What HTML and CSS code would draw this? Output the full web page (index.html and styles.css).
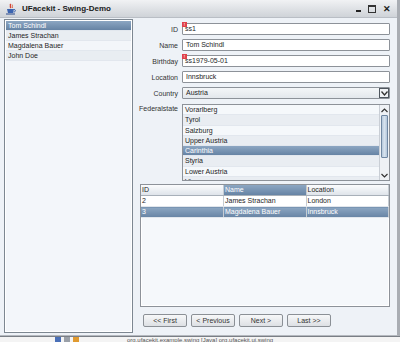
FILE: index.html
```html
<!DOCTYPE html>
<html lang="en">
<head>
    <meta charset="UTF-8">
    <title>UFacekit - Swing-Demo</title>
    <link rel="stylesheet" href="styles.css">
</head>
<body>
    <div class="window">
        <!-- Title bar -->
        <div class="titlebar">
            <svg class="app-icon" width="12" height="12" viewBox="0 0 12 12">
                <path d="M5 1 C6.5 2.5 4 3.5 6 5" stroke="#d23a2a" stroke-width="1.2" fill="none"/>
                <path d="M7 1.5 C8 3 6.5 3.5 7.5 5" stroke="#e05a3a" stroke-width="1" fill="none"/>
                <path d="M2 6 H9 L8 10 H3 Z" fill="#3a63b0"/>
                <path d="M9 6.5 C11 6.5 11 9 8.5 9" stroke="#3a63b0" stroke-width="1" fill="none"/>
                <rect x="1" y="10.5" width="9" height="1" fill="#2b4b8c"/>
            </svg>
            <span class="title">UFacekit - Swing-Demo</span>
            <div class="win-controls">
                <span class="ctl-min"></span>
                <span class="ctl-max"></span>
                <span class="ctl-close">&#x2715;</span>
            </div>
        </div>

        <div class="content">
            <!-- People list -->
            <ul class="people">
                <li class="selected">Tom Schindl</li>
                <li>James Strachan</li>
                <li>Magdalena Bauer</li>
                <li>John Doe</li>
            </ul>

            <div class="detail">
                <div class="form">
                    <label>ID</label>
                    <div class="field error">ss1<span class="marker">!</span></div>

                    <label>Name</label>
                    <div class="field">Tom Schindl</div>

                    <label>Birthday</label>
                    <div class="field error">ss1979-05-01<span class="marker">!</span></div>

                    <label>Location</label>
                    <div class="field">Innsbruck</div>

                    <label>Country</label>
                    <div class="field combo">
                        <span>Austria</span>
                        <span class="combo-btn">
                            <svg width="7" height="5" viewBox="0 0 7 5"><path d="M0.5 0.5 L3.5 4 L6.5 0.5" stroke="#333" stroke-width="1.3" fill="none"/></svg>
                        </span>
                    </div>

                    <label class="top">Federalstate</label>
                    <div class="listbox">
                        <ul class="states">
                            <li>Vorarlberg</li>
                            <li>Tyrol</li>
                            <li>Salzburg</li>
                            <li>Upper Austria</li>
                            <li class="selected">Carinthia</li>
                            <li>Styria</li>
                            <li>Lower Austria</li>
                            <li>Vienna</li>
                        </ul>
                        <div class="scrollbar">
                            <span class="sb-btn">
                                <svg width="7" height="5" viewBox="0 0 7 5"><path d="M0.5 4 L3.5 1 L6.5 4" stroke="#333" stroke-width="1.2" fill="none"/></svg>
                            </span>
                            <span class="sb-track">
                                <span class="sb-thumb"></span>
                            </span>
                            <span class="sb-btn">
                                <svg width="7" height="5" viewBox="0 0 7 5"><path d="M0.5 1 L3.5 4 L6.5 1" stroke="#333" stroke-width="1.2" fill="none"/></svg>
                            </span>
                        </div>
                    </div>
                </div>

                <!-- Results table -->
                <div class="table-box">
                    <table>
                        <thead>
                            <tr>
                                <th>ID</th>
                                <th class="sorted">Name</th>
                                <th>Location</th>
                            </tr>
                        </thead>
                        <tbody>
                            <tr>
                                <td>2</td>
                                <td>James Strachan</td>
                                <td>London</td>
                            </tr>
                            <tr class="selected">
                                <td>3</td>
                                <td>Magdalena Bauer</td>
                                <td>Innsbruck</td>
                            </tr>
                        </tbody>
                    </table>
                </div>

                <div class="buttons">
                    <button>&lt;&lt; First</button>
                    <button>&lt; Previous</button>
                    <button>Next &gt;</button>
                    <button>Last &gt;&gt;</button>
                </div>
            </div>
        </div>
    </div>

    <div class="taskbar">
        <span class="tb-icon blue"></span>
        <span class="tb-icon gray"></span>
        <span class="tb-icon orange"></span>
        <span class="tb-text">org.ufacekit.example.swing [Java] org.ufacekit.ui.swing</span>
    </div>
</body>
</html>
```

FILE: styles.css
```css
* {
    margin: 0;
    padding: 0;
    box-sizing: border-box;
}

:root {
    --bg: #eef2f7;
    --border: #8a9098;
    --select-top: #8ca6c2;
    --select-bottom: #6683a4;
    --text: #1e1e1e;
}

body {
    width: 400px;
    height: 342px;
    overflow: hidden;
    background: #ffffff;
    font-family: "Liberation Sans", Arial, sans-serif;
    font-size: 7px;
    color: var(--text);
}

ul {
    list-style: none;
}

/* Window frame */
.window {
    height: 336px;
    display: flex;
    flex-direction: column;
    background: var(--bg);
    border-right: 3px solid #a9adb3;
    border-bottom: 1px solid #b5b9bf;
}

.titlebar {
    height: 18px;
    display: flex;
    align-items: center;
    padding: 0 6px 0 5px;
    background: linear-gradient(#f1f2f4, #dcdfe3 60%, #cfd3d8);
    border-bottom: 1px solid #b9bec5;
}

.app-icon {
    margin-right: 5px;
}

.title {
    font-size: 8px;
    font-weight: bold;
    color: #1a1a1a;
}

.win-controls {
    margin-left: auto;
    display: flex;
    align-items: center;
    gap: 7px;
}

.ctl-min {
    width: 5px;
    height: 2px;
    margin-top: 4px;
    background: #222;
}

.ctl-max {
    width: 8px;
    height: 8px;
    border: 1px solid #333;
    border-top-width: 2px;
}

.ctl-close {
    font-size: 9px;
    font-weight: bold;
    color: #222;
}

/* Main content */
.content {
    flex: 1;
    display: flex;
    gap: 5px;
    padding: 1px 7px 2px 4px;
}

.people {
    width: 129px;
    border: 1px solid #7d8791;
    box-shadow: inset 0 0 0 1px #ffffff;
    background: #f3f6fa;
    padding: 1px;
}

.people li,
.states li {
    height: 10px;
    line-height: 10px;
    padding-left: 2px;
    border-bottom: 1px solid #e2e7ee;
    white-space: nowrap;
}

.people li:nth-child(even),
.states li:nth-child(even) {
    background: #e9edf2;
}

.people li.selected,
.states li.selected,
tr.selected td,
th.sorted {
    background: linear-gradient(var(--select-top), var(--select-bottom));
    color: #ffffff;
}

.detail {
    flex: 1;
    display: flex;
    flex-direction: column;
    padding-top: 4px;
}

/* Form */
.form {
    display: grid;
    grid-template-columns: 40px 1fr;
    column-gap: 4px;
    row-gap: 4px;
    align-items: center;
}

.form label {
    text-align: right;
    white-space: nowrap;
    color: #333;
}

.form label.top {
    align-self: start;
    padding-top: 2px;
}

.field {
    position: relative;
    height: 12px;
    line-height: 10px;
    padding-left: 3px;
    background: #ffffff;
    border: 1px solid #8d9299;
    border-radius: 1px;
}

.field.error {
    padding-left: 2px;
}

.marker {
    position: absolute;
    left: -1px;
    top: -2px;
    width: 5px;
    height: 5px;
    background: #e0404a;
    color: #ffffff;
    font-size: 4px;
    line-height: 5px;
    text-align: center;
    font-weight: bold;
}

.combo {
    display: flex;
    justify-content: space-between;
    background: linear-gradient(#f4f6f8, #e3e7ec);
}

.combo-btn {
    width: 10px;
    height: 10px;
    display: flex;
    align-items: center;
    justify-content: center;
    border-left: 1px solid #5d646c;
    border: 1px solid #4f565e;
    background: #f0f2f5;
}

.listbox {
    margin-top: 1px;
    height: 77px;
    display: flex;
    background: #f5f8fb;
    border: 1px solid #8d9299;
    overflow: hidden;
}

.states {
    flex: 1;
}

.states li {
    height: 10.3px;
    line-height: 10px;
}

.scrollbar {
    width: 10px;
    display: flex;
    flex-direction: column;
    border-left: 1px solid #c9ced5;
    background: #eef1f5;
}

.sb-btn {
    height: 10px;
    display: flex;
    align-items: center;
    justify-content: center;
}

.sb-track {
    flex: 1;
    padding: 0 1px;
}

.sb-thumb {
    display: block;
    height: 43px;
    border: 1px solid #6f87a2;
    border-radius: 1px;
    background: linear-gradient(90deg, #b6c9dc, #d6e2ee, #b3c6da);
}

/* Table */
.table-box {
    margin: 3px 0 0 2px;
    height: 123px;
    background: #f5f8fb;
    border: 1px solid #8d9299;
    box-shadow: inset 0 0 0 1px #ffffff;
}

table {
    width: 100%;
    border-collapse: collapse;
    table-layout: fixed;
}

th,
td {
    height: 10px;
    line-height: 10px;
    padding-left: 1px;
    text-align: left;
    font-weight: normal;
    white-space: nowrap;
    border-right: 1px solid #c6ccd3;
}

th {
    background: linear-gradient(#fbfcfd, #dfe4ea);
    border-bottom: 1px solid #a8b0b9;
}

td {
    background: #ffffff;
    border-bottom: 1px solid #e1e6ec;
}

/* Navigation buttons */
.buttons {
    display: flex;
    gap: 4px;
    margin: 7px 0 0 5px;
}

.buttons button {
    width: 44px;
    height: 13px;
    font-family: inherit;
    font-size: 7px;
    color: #333;
    background: linear-gradient(#f7f8f9, #dde0e4);
    border: 1px solid #8b9096;
    border-radius: 2px;
}

/* Bottom taskbar strip */
.taskbar {
    height: 6px;
    display: flex;
    align-items: center;
    gap: 3px;
    padding-left: 55px;
    border-top: 1px solid #7a7f86;
    background: #f4f4f4;
}

.tb-icon {
    width: 6px;
    height: 5px;
}

.tb-icon.blue {
    background: #4a70b8;
}

.tb-icon.gray {
    background: #9aa0a8;
}

.tb-icon.orange {
    background: #e09a30;
}

.tb-text {
    margin-left: 45px;
    font-size: 6px;
    color: #555;
    white-space: nowrap;
}
```
